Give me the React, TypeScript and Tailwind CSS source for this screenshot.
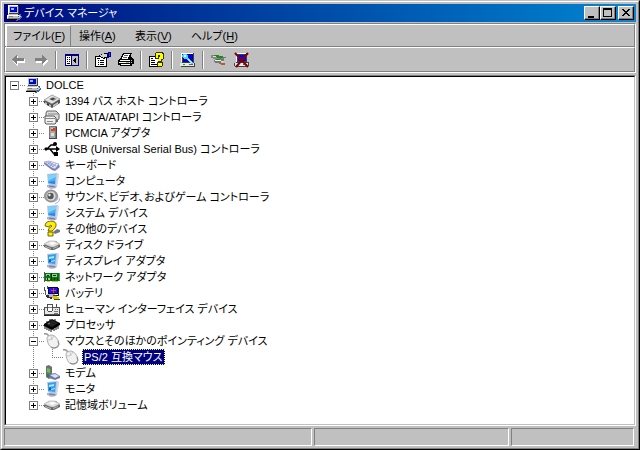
import type { ReactNode } from 'react';
import clsx from 'clsx';

interface DeviceNode {
    name: string;
    icon: ReactNode;
    state: 'open' | 'closed' | 'leaf';
    children?: DeviceNode[];
}

function Icon({ children, smooth }: { children: ReactNode; smooth?: boolean }) {
    return (
        <svg
            viewBox="0 0 16 16"
            className="size-4 shrink-0"
            shapeRendering={smooth ? 'auto' : 'crispEdges'}
            aria-hidden="true"
        >
            {children}
        </svg>
    );
}

const computerIcon = (
    <Icon>
        <path d="M2 0h10v1h1v8h-1v1h2v4H1v-3h1z" fill="#c0c0c0" />
        <path d="M2 0h10v1H3v8H2z" fill="#fff" />
        <path d="M12 1h1v8H3v-1h9z" fill="#404040" />
        <path d="M4 2h7v5H4z" fill="#0000a8" />
        <path d="M4 2h6v4H4z" fill="#0000ff" />
        <path d="M5 3h3v2H5z" fill="#80c8ff" />
        <path d="M1 10h12v1H2v2H1z" fill="#fff" />
        <path d="M3 11h4v1H3zM2 13h10v1H2z" fill="#808080" />
        <path d="M1 14h11v1H1zM13 10h1v2h-1z" fill="#000" />
        <path d="M13 9h2v2h1v2h-1v1h-1v1h-2v1h-2v-1h1v-1h1v-3h1z" fill="#506890" />
        <path d="M13 10h1v1h1v1h-1v1h-2v-1h1z" fill="#b0d0f0" />
    </Icon>
);

const hostIcon = (
    <Icon smooth>
        <path d="M0 8l8-5 8 4v3l-8 5-8-5z" fill="#505050" />
        <path d="M0 7l8-5 8 4-8 5z" fill="#e4e4e4" stroke="#707070" strokeWidth=".6" />
        <path d="M5 6l4-2 4 2-4 2z" fill="#909090" />
        <path d="M6 6l3-1 2 1-3 1z" fill="#333" />
        <path d="M1 9l6 3v2L1 11zM9 12l5-3v2l-5 3z" fill="#c4c4c4" />
        <path d="M3 10l2 1v2l-2-1z" fill="#303030" />
    </Icon>
);

const ideIcon = (
    <Icon smooth>
        <path d="M3 2h9l3 3v5l-2 1H5L2 8V4z" fill="#dcdcdc" stroke="#555" strokeWidth=".9" />
        <path d="M4 5h10" stroke="#888" />
        <path d="M1 7h9l2 2v5l-1 1H2l-1-1z" fill="#f2f2f2" stroke="#444" strokeWidth=".9" />
        <path d="M1 9h10v1H1zM3 12h6v1H3z" fill="#888" />
        <path d="M12 11h2v2h-2z" fill="#666" />
    </Icon>
);

const pcmciaIcon = (
    <Icon>
        <path d="M5 1h8v13H5z" fill="#777" />
        <path d="M6 2h5v11H6z" fill="#a8a8a8" />
        <path d="M7 3h4v3H7z" fill="#e04020" />
        <path d="M7 3h2v1H7z" fill="#ffb090" />
        <path d="M7 8h3v3H7z" fill="#ddd" />
        <path d="M12 2h1v12H5v-1h7z" fill="#444" />
    </Icon>
);

const usbIcon = (
    <Icon smooth>
        <path d="M1 8h13M3 8l4-4h3M6 8l4 5h2" fill="none" stroke="#000" strokeWidth="1.4" />
        <path d="M12 5l4 3-4 3zM0 8l2-2 2 2-2 2z" />
        <circle cx="11" cy="3" r="2" />
        <path d="M10 11h4v4h-4z" />
    </Icon>
);

const keyboardIcon = (
    <Icon smooth>
        <path d="M0 6l5-1 10 3 1 2-5 4-3-1-8-6z" fill="#7880b8" />
        <path d="M0 5l5-1 10 3-4 5-3-1z" fill="#e4e8fa" stroke="#8088b8" strokeWidth=".6" />
        <path d="M2 5l8 5M4 5l8 4M7 5l-3 2M9 6l-3 3M12 7l-4 3" stroke="#8d95cc" strokeWidth=".8" />
    </Icon>
);

const monitorBody = (
    <>
        <path d="M3 12l5-1 5 2-1 2-5 1-4-2z" fill="#b0b4d4" />
        <path d="M5 13l6 1" stroke="#7078a0" />
        <path d="M3 1l10-1 2 1-2 12-9-2z" fill="#b9c4dc" />
        <path d="M13 1l2 0-2 12-1-1z" fill="#d4daec" />
    </>
);

const systemIcon = (
    <Icon smooth>
        {monitorBody}
        <path d="M4 2l8-1-1 10-7-1z" fill="#48b0f0" />
        <path d="M4 2l8-1v3l-8 4z" fill="#80d0fc" />
        <path d="M5 9l6-1v3l-6-1z" fill="#2888e0" />
    </Icon>
);

const displayIcon = (
    <Icon smooth>
        {monitorBody}
        <path d="M4 2l8-1-1 10-7-1z" fill="#30a0e8" />
        <path d="M5 4l5-1v2l-5 1zM7 8l4-1v1l-4 1z" fill="#b4e4ff" />
        <path d="M5 7l2-1v3H5z" fill="#1060b8" />
    </Icon>
);

const soundIcon = (
    <Icon smooth>
        <ellipse cx="7" cy="7" rx="6.5" ry="6" fill="#a0a0a0" stroke="#777" strokeWidth=".8" />
        <ellipse cx="7" cy="7" rx="4.5" ry="4.5" fill="#dcdcdc" />
        <circle cx="6.5" cy="7" r="3.2" fill="#555" />
        <circle cx="5.5" cy="6" r="1.2" fill="#eee" />
        <path d="M14 7q1 4-4 6M16 9q0 4-5 6" fill="none" stroke="#a8a8f0" />
    </Icon>
);

const questionIcon = (
    <Icon smooth>
        <path d="M9 11l4-3 3 1v2l-5 2z" fill="#777" />
        <path
            d="M1 5Q1 1 6 0q7 0 6 5-1 3-4 5H4Q4 7 8 5 6 3 5 6z"
            fill="#ffee00"
            stroke="#4c4400"
            strokeWidth=".8"
        />
        <path d="M4 11h5v4H4z" fill="#ffee00" stroke="#4c4400" strokeWidth=".8" />
    </Icon>
);

const diskIcon = (
    <Icon smooth>
        <path d="M0 8l5-4h7l4 4v2l-6 3H7l-7-3z" fill="#686868" />
        <path d="M0 7l5-3h6l5 3-6 3H7z" fill="#e2e2e2" stroke="#999" strokeWidth=".5" />
        <path d="M5 6l3-1 4 1-4 2z" fill="#fff" />
        <path d="M1 9l6 2v1l-6-2zM9 11l5-2v1l-5 2z" fill="#b8b8b8" />
    </Icon>
);

const networkIcon = (
    <Icon>
        <path d="M0 3h1v10H0z" fill="#555" />
        <path d="M1 4h15v8H1z" fill="#007818" />
        <path d="M2 5h4v2H2zM8 5h5v3H8zM2 9h4v2H2z" fill="#9cd088" />
        <path d="M3 6h2v1H3zM9 6h3v1H9zM3 9h1v2H3zM7 4h1v8H7zM10 9h1v2h-1zM13 9h1v2h-1z" fill="#003800" />
        <path d="M3 12h3v1H3zM8 12h6v1H8z" fill="#c8c040" />
        <path d="M15 4h1v7h-1z" fill="#50a050" />
    </Icon>
);

const batteryIcon = (
    <Icon>
        <path d="M0 2h1v3h1v5H1V6H0zM3 1h1v3H3z" fill="#555" />
        <path d="M4 2h10v7H4z" fill="#000070" />
        <path d="M5 3h8v5H5z" fill="#1818e8" />
        <path d="M9 3h1v5H9zM7 5h5v1H7z" fill="#ff3030" />
        <path d="M14 3h1v8h-1zM2 10h12v1H2z" fill="#222" />
        <path d="M3 9h8v4H3z" fill="#b8b8c8" />
        <path d="M2 10h3v2h3v2H6v-1H3z" fill="#333" />
        <path d="M9 11h4v1h2v3h-4v-1H9z" fill="#d8c800" />
        <path d="M10 14h6v1h-6zM9 10h3v1H9z" fill="#504800" />
    </Icon>
);

const hidIcon = (
    <Icon>
        <path d="M0 6h3V3h6v3h3V3h1v3h3v8H0z" fill="#505050" />
        <path d="M1 7h14v6H1z" fill="#e8e8e8" />
        <path d="M3 3h5v1h1v6H8v1H4v-1H3z" fill="#505050" />
        <path d="M4 4h4v6H4z" fill="#fff" />
        <path d="M4 6h4v1H4z" fill="#808080" />
        <path d="M11 8h1v1h-1zM13 8h1v1h-1zM10 10h4v1h-4zM10 12h4v1h-4z" fill="#777" />
        <path d="M0 14h16v1H0z" fill="#222" />
    </Icon>
);

const processorIcon = (
    <Icon smooth>
        <path d="M0 7l8-5 8 4v2l-8 5-8-4z" fill="#000" />
        <path d="M2 7l6-4 6 3-6 4z" fill="#222" />
        <path d="M1 9v3M3 10v3M5 11v3M7 12v3M10 12v2M12 10v3M14 9v3M3 4v2M6 2v2M11 2v2" stroke="#111" />
        <path d="M4 7l2-1" stroke="#888" />
    </Icon>
);

const mouseIcon = (
    <Icon smooth>
        <path d="M0 1q2-1 4 1t2 1" fill="none" stroke="#999" strokeWidth="1.6" />
        <path
            d="M3 6q0-4 5-4 3 0 6 5 2 4 0 7-3 2-6 1-4-2-5-9z"
            fill="#f1f1f1"
            stroke="#a4a4a4"
            strokeWidth=".9"
        />
        <path d="M4 7q4 1 6-4M7 3l1 4" fill="none" stroke="#c4c4c4" strokeWidth=".9" />
        <path d="M14 8q2 4-1 6-3 2-6 0" fill="none" stroke="#8b8b8b" />
    </Icon>
);

const modemIcon = (
    <Icon smooth>
        <path d="M2 1l3-1 3 2v10l-3 2-3-2z" fill="#707070" />
        <path d="M3 3l3 1v4L3 7z" fill="#60c850" />
        <path d="M3 9l3 1v3l-3-1z" fill="#2a8050" />
        <path d="M6 9l5-1 5 3v2l-5 2-6-2z" fill="#7078a8" />
        <path d="M6 10l5-1 4 2-4 2z" fill="#dde0f4" />
    </Icon>
);

const devices: DeviceNode = {
    name: 'DOLCE',
    icon: computerIcon,
    state: 'open',
    children: [
        { name: '1394 バス ホスト コントローラ', icon: hostIcon, state: 'closed' },
        { name: 'IDE ATA/ATAPI コントローラ', icon: ideIcon, state: 'closed' },
        { name: 'PCMCIA アダプタ', icon: pcmciaIcon, state: 'closed' },
        { name: 'USB (Universal Serial Bus) コントローラ', icon: usbIcon, state: 'closed' },
        { name: 'キーボード', icon: keyboardIcon, state: 'closed' },
        { name: 'コンピュータ', icon: systemIcon, state: 'closed' },
        { name: 'サウンド、ビデオ、およびゲーム コントローラ', icon: soundIcon, state: 'closed' },
        { name: 'システム デバイス', icon: systemIcon, state: 'closed' },
        { name: 'その他のデバイス', icon: questionIcon, state: 'closed' },
        { name: 'ディスク ドライブ', icon: diskIcon, state: 'closed' },
        { name: 'ディスプレイ アダプタ', icon: displayIcon, state: 'closed' },
        { name: 'ネットワーク アダプタ', icon: networkIcon, state: 'closed' },
        { name: 'バッテリ', icon: batteryIcon, state: 'closed' },
        { name: 'ヒューマン インターフェイス デバイス', icon: hidIcon, state: 'closed' },
        { name: 'プロセッサ', icon: processorIcon, state: 'closed' },
        {
            name: 'マウスとそのほかのポインティング デバイス',
            icon: mouseIcon,
            state: 'open',
            children: [{ name: 'PS/2 互換マウス', icon: mouseIcon, state: 'leaf' }],
        },
        { name: 'モデム', icon: modemIcon, state: 'closed' },
        { name: 'モニタ', icon: displayIcon, state: 'closed' },
        { name: '記憶域ボリューム', icon: diskIcon, state: 'closed' },
    ],
};

const SELECTED = 'PS/2 互換マウス';

// One 19px indent cell: dotted connectors with the expander box on top
function Branch({ state, up, down }: { state: DeviceNode['state']; up: boolean; down: boolean }) {
    return (
        <svg viewBox="0 0 19 16" className="h-4 w-[19px]" shapeRendering="crispEdges" aria-hidden="true">
            <g stroke="#808080" strokeDasharray="1 1">
                {up && <path d="M8.5 0V8" />}
                {down && <path d="M8.5 8V16" />}
                <path d="M8 8.5H19" />
            </g>
            {state !== 'leaf' && (
                <>
                    <path d="M4.5 4.5h8v8h-8z" fill="#fff" stroke="#808080" />
                    <path d="M6 8h5v1H6z" />
                    {state === 'closed' && <path d="M8 6h1v5H8z" />}
                </>
            )}
        </svg>
    );
}

function TreeItem({ node, depth, last }: { node: DeviceNode; depth: number; last: boolean }) {
    const selected = node.name === SELECTED;
    const branch = <Branch state={node.state} up={depth > 0} down={depth > 0 && !last} />;

    return (
        <li role="treeitem" aria-selected={selected}>
            <div className="flex h-4 items-center">
                {depth > 1 && (
                    <svg viewBox="0 0 19 16" className="h-4 w-[19px]" shapeRendering="crispEdges" aria-hidden="true">
                        <path d="M8.5 0V16" stroke="#808080" strokeDasharray="1 1" />
                    </svg>
                )}
                {node.state === 'leaf' ? (
                    branch
                ) : (
                    <button type="button" aria-label={`${node.name} ${node.state}`}>
                        {branch}
                    </button>
                )}
                {node.icon}
                <span
                    className={clsx(
                        'ml-[3px] h-4 px-0.5 whitespace-nowrap',
                        selected && 'bg-[#000080] text-white outline-1 -outline-offset-1 outline-dotted outline-[#ffff7f]',
                    )}
                >
                    {node.name}
                </span>
            </div>
            {node.children && (
                <ul role="group" className={clsx(depth === 0 && 'pl-[19px]')}>
                    {node.children.map((child, i) => (
                        <TreeItem
                            key={child.name}
                            node={child}
                            depth={depth + 1}
                            last={i === node.children!.length - 1}
                        />
                    ))}
                </ul>
            )}
        </li>
    );
}

function CaptionButton({ label, children }: { label: string; children: ReactNode }) {
    return (
        <button
            type="button"
            aria-label={label}
            className="h-3.5 w-4 border border-t-white border-l-white border-r-black border-b-black bg-[#c0c0c0] shadow-[inset_-1px_-1px_#808080]"
        >
            <svg viewBox="0 0 14 12" className="h-3 w-3.5" shapeRendering="crispEdges" aria-hidden="true">
                {children}
            </svg>
        </button>
    );
}

function MenuButton({ label, hotkey, active }: { label: string; hotkey: string; active?: boolean }) {
    return (
        <button
            type="button"
            className={clsx(
                'h-[22px] border text-left whitespace-nowrap',
                active
                    ? 'w-[65px] border-t-white border-l-white border-r-[#808080] border-b-[#808080] pl-1.5'
                    : 'w-14 border-transparent pl-[7px]',
            )}
        >
            {label}(<u className="underline-offset-2">{hotkey}</u>)
        </button>
    );
}

function ToolButton({ label, children }: { label: string; children: ReactNode }) {
    return (
        <button type="button" aria-label={label} className="flex h-[22px] w-[23px] items-center justify-center">
            <Icon>{children}</Icon>
        </button>
    );
}

function Separator() {
    return <div className="mx-[3px] h-[18px] w-0.5 border-l border-[#808080] bg-white" />;
}

function Toolbar() {
    return (
        <div role="toolbar" className="flex h-[23px] items-center">
            <ToolButton label="戻る">
                <path d="M8 4v3h7v4H8v3L2 9z" fill="#fff" />
                <path d="M7 3v3h7v3H7v3H6v-1H5v-1H4V9H3V8H2V7h1V6h1V5h1V4h1V3z" fill="#808080" />
            </ToolButton>
            <ToolButton label="進む">
                <path d="M10 4v3H3v4h7v3l5-5z" fill="#fff" />
                <path d="M9 3v3H2v3h7v3h1v-1h1v-1h1V9h1V8h1V7h-1V6h-1V5h-1V4h-1V3z" fill="#808080" />
            </ToolButton>
            <Separator />
            <ToolButton label="コンソール ツリーの表示">
                <path d="M1 2h14v12H1z" fill="#000080" />
                <path d="M2 4h5v9H2z" fill="#fff" />
                <path d="M8 4h6v9H8z" fill="#c0c0c0" />
                <path d="M3 5h1v1H3zM5 5h1v1H5zM3 7h1v1H3zM5 7h1v1H5zM3 9h1v1H3zM5 9h1v1H5zM3 11h3v1H3zM9 8h1v1H9zM10 7h1v3h-1zM11 6h1v5h-1z" fill="#000" />
            </ToolButton>
            <Separator />
            <ToolButton label="プロパティ">
                <path d="M0 4h12v11H0z" fill="#000" />
                <path d="M1 5h10v9H1z" fill="#fff" />
                <path d="M3 8h1v1H3zM5 8h4v1H5zM3 10h1v1H3zM5 10h4v1H5zM3 12h1v1H3zM5 12h4v1H5zM2 6h3v1H2z" fill="#000" />
                <path d="M4 3h2V2h3V1h3v5h-2v1H8V6H6V5H4z" fill="#000" />
                <path d="M5 3h2V2h5v3H9v1H8V5H6V4H5z" fill="#d0d0d0" />
                <path d="M12 1h1V0h3v5h-2v1h-2z" fill="#000080" />
                <path d="M14 1h1v3h-1z" fill="#3848c8" />
            </ToolButton>
            <ToolButton label="印刷">
                <path d="M5 1h9v1h-1v3h1v1h1v1h1v5h-2v2H2v-1H0V8h1V7h1V6h1V4h1z" fill="#000" />
                <path d="M6 2h6v1h-1v2h-1v2H4V5h1V3h1z" fill="#fff" />
                <path d="M6 3h4v1H6zM5 5h4v1H5z" fill="#606060" />
                <path d="M2 8h10v1H2zM1 10h11v1H1zM3 12h9v1H3z" fill="#fff" />
                <path d="M13 8h1v1h-1zM13 10h1v1h-1z" fill="#c0c0c0" />
                <path d="M8 10h3v1H8z" fill="#c8c800" />
            </ToolButton>
            <Separator />
            <ToolButton label="ヘルプ">
                <path d="M0 4h12v11H0z" fill="#000" />
                <path d="M1 5h10v9H1z" fill="#fff" />
                <path d="M2 6h2v1H2zM2 8h4v1H2zM2 10h4v1H2zM2 12h6v1H2z" fill="#000" />
                <path d="M6 1h1V0h7v1h1v6h-1v1h-1v2h1v4h-1v1H9v-1H8v-4h1V7H6z" fill="#303000" />
                <path d="M7 1h6v1h1v5h-2v2H9V7h1V5h1V3H9v3H7z" fill="#ffff00" />
                <path d="M9 11h4v3H9z" fill="#ffff00" />
            </ToolButton>
            <Separator />
            <ToolButton label="ハードウェア変更のスキャン">
                <path d="M1 1h13v10h1v4H1v-1H0v-3h2v-1H1z" fill="#404040" />
                <path d="M1 1h12v1H2v8H1z" fill="#fff" />
                <path d="M3 2h10v8H3z" fill="#0000c0" />
                <path d="M0 11h14v3H0z" fill="#e8e8e8" />
                <path d="M9 12h4v1H9z" fill="#606060" />
                <path d="M3 12h2v1H3z" fill="#00b000" />
                <path d="M3 2h4v1h1v3h1v1h1v1h1v1h1v1h1v2h-2v-1h-1v-1H9V9H8V8H7V7H4V6H3V5H2V3h1z" fill="#40d8ff" />
                <path d="M4 3h2v2H4zM8 7h1v1h1v1h1v1h1v1h-1v-1h-1V9H9V8H8z" fill="#fff" />
            </ToolButton>
            <Separator />
            <ToolButton label="無効">
                <path d="M0 3h4v1h4v1h5v2h-3v2H6V8H4V7H2V6H0z" fill="#888" />
                <path d="M3 3h5v1h4v2H9v2H5V7h5V6H6V5H3z" fill="#208820" />
                <path d="M3 8h3v1h4v2h4v1H8v-1H4v-1H3zM12 5h3v1h-2v3h-3V7h2z" fill="#777" />
                <path d="M4 8h6v1H4z" fill="#eee" />
                <path d="M9 11h5v2h-4v-1H9z" fill="#b06030" />
                <path d="M10 9h3v1h-3zM2 4h3v1H2z" fill="#ddd" />
            </ToolButton>
            <ToolButton label="削除">
                <path d="M2 1h11v9h2v4h-1v1H1v-1H0v-3h2z" fill="#404040" />
                <path d="M2 1h10v1H3v8H2z" fill="#fff" />
                <path d="M4 3h8v6H4z" fill="#0000ff" />
                <path d="M1 11h13v3H1z" fill="#e8e8e8" />
                <path d="M9 12h4v1H9z" fill="#606060" />
                <path
                    d="M1 1l13 14M14 1L2 15"
                    stroke="#800000"
                    strokeWidth="2"
                    shapeRendering="geometricPrecision"
                />
            </ToolButton>
        </div>
    );
}

export default function App() {
    return (
        <div
            lang="ja"
            className="flex h-screen flex-col border border-t-[#c0c0c0] border-l-[#c0c0c0] border-r-black border-b-black bg-[#c0c0c0] font-['Liberation_Sans','Noto_Sans_CJK_JP',sans-serif] text-[11px] leading-4 text-black [font-feature-settings:'palt']"
        >
            <div className="flex min-h-0 flex-1 flex-col border border-t-white border-l-white border-r-[#808080] border-b-[#808080] p-0.5">
                <header className="flex h-[18px] shrink-0 items-center bg-linear-to-r from-[#000080] to-[#1084d0] px-0.5 text-white">
                    {computerIcon}
                    <h1 className="ml-0.5 flex-1">デバイス マネージャ</h1>
                    <CaptionButton label="最小化">
                        <path d="M3 9h6v2H3z" />
                    </CaptionButton>
                    <CaptionButton label="最大化">
                        <path d="M2 1h9v9H2zM3 3v6h7V3z" fillRule="evenodd" />
                    </CaptionButton>
                    <div className="ml-0.5 flex">
                        <CaptionButton label="閉じる">
                            <path d="M3 2h2v1h1v1h2V3h1V2h2v1h-1v1H9v1H8v1h1v1h1v1h1v1H9V8H8V7H6v1H5v1H3V8h1V7h1V6h1V5H5V4H4V3H3z" />
                        </CaptionButton>
                    </div>
                </header>

                <div className="mt-px shrink-0 border border-[#808080] border-r-white border-b-white">
                    <div className="border-t border-l border-r border-t-white border-l-white border-r-[#808080]">
                        <nav className="flex">
                            <MenuButton label="ファイル" hotkey="F" active />
                            <MenuButton label="操作" hotkey="A" />
                            <MenuButton label="表示" hotkey="V" />
                            <MenuButton label="ヘルプ" hotkey="H" />
                        </nav>
                    </div>
                    <div className="border border-t-white border-l-white border-r-[#808080] border-b-[#808080] shadow-[0_-1px_#808080]">
                        <Toolbar />
                    </div>
                </div>

                <main className="mt-0.5 min-h-0 flex-1 border border-[#808080] border-r-white border-b-white">
                    <div className="h-full overflow-hidden border border-black border-r-[#c0c0c0] border-b-[#c0c0c0] bg-white">
                        <ul role="tree">
                            <TreeItem node={devices} depth={0} last />
                        </ul>
                    </div>
                </main>

                <footer className="mt-0.5 flex h-[18px] shrink-0 gap-0.5 pr-0.5">
                    <div className="flex-1 border border-[#808080] border-r-white border-b-white" />
                    <div className="w-[195px] border border-[#808080] border-r-white border-b-white" />
                    <div className="w-[123px] border border-[#808080] border-r-white border-b-white" />
                </footer>
            </div>
        </div>
    );
}
